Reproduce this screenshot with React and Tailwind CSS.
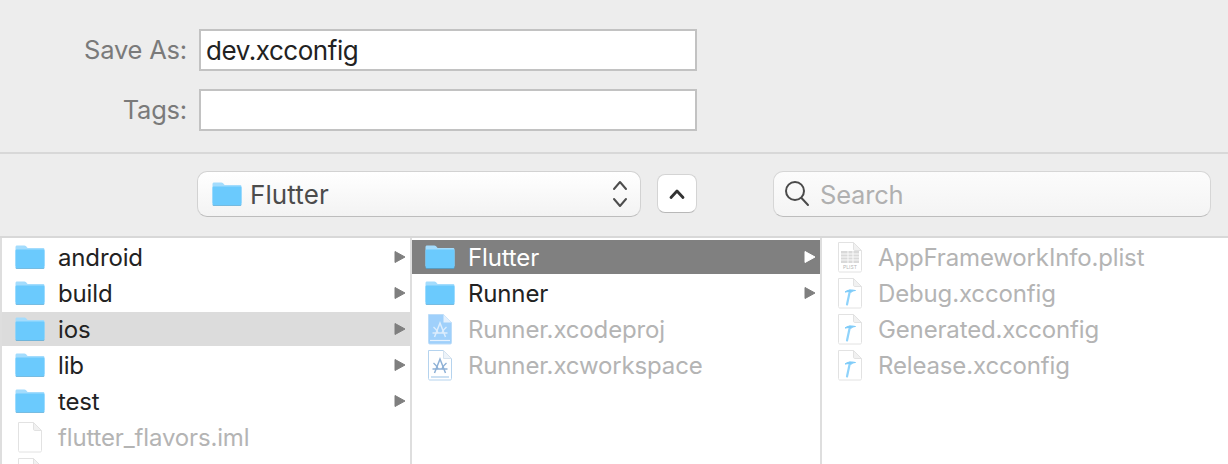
const font = { fontFamily: "Inter, 'Liberation Sans', sans-serif" };

function Folder({ className = "" }) {
  return (
    <svg width="30" height="24" viewBox="0 0 30 24" className={className}>
      <path d="M0.500 21V2c0-1 .6-1.600 1.600-1.600h7.200c.8 0 1.300.2 1.800.8L12.600 3H28c1 0 1.500.6 1.500 1.500V21z" fill="#a3dcfd" />
      <path d="M0.500 5.800c0-.8.600-1.300 1.300-1.300h26.400c.8 0 1.300.5 1.300 1.300V21.500c0 1-.6 1.500-1.500 1.500H2c-.9 0-1.500-.5-1.500-1.500z" fill="#6bcafd" />
      <path d="M0.500 21.500c0 1 .6 1.500 1.500 1.500h26c.9 0 1.500-.5 1.500-1.500v.8c0 1-.6 1.500-1.500 1.500H2c-.9 0-1.500-.5-1.500-1.500z" fill="#4ba6d8" />
    </svg>
  );
}

function Page({ children }) {
  return (
    <svg width="24" height="31" viewBox="1 1 24 31" className="shrink-0">
      <path d="M1.500 1.500h15l8 8V29.500c0 1-.5 1.500-1.500 1.500H3c-1 0-1.500-.5-1.500-1.500z" fill="#fff" stroke="#e2e2e2" />
      <path d="M16.500 1.500v6.500c0 1 .5 1.500 1.500 1.500h6.500z" fill="#f1f1f1" stroke="#e2e2e2" />
      {children}
    </svg>
  );
}

function Hammer() {
  return (
    <Page>
      <path d="M10 27.500l3-14" stroke="#8fd3fb" strokeWidth="2.200" strokeLinecap="round" />
      <path d="M8 15c2.500-2.200 6-2.500 10.500-1.500-2.200.2-3.500.7-4.200 1.800l-2-.8z" fill="#7ccbf9" stroke="#7ccbf9" strokeWidth="1" />
    </Page>
  );
}

function Plist() {
  return (
    <Page>
      <rect x="4" y="10" width="18" height="12" fill="#d9d9d9" />
      <path d="M4 13h18M4 16h18M4 19h18M11 10v12M16 10v12" stroke="#fafafa" strokeWidth="1" />
      <text x="13" y="28" textAnchor="middle" fontSize="5" fill="#b5b5b5" fontFamily="Inter, sans-serif">PLIST</text>
    </Page>
  );
}

function AppA({ stroke }) {
  return (
    <g fill="none" stroke={stroke} strokeWidth="1.500">
      <path d="M7.500 24l5.500-14 5.500 14" />
      <path d="M5.500 20h15" />
      <path d="M6.500 14c2.500 2 4 4 4.500 6M19.500 14c-2.500 2-4 4-4.500 6" />
    </g>
  );
}

function XcodeProj() {
  return (
    <svg width="24" height="31" viewBox="1 1 24 31" className="shrink-0">
      <path d="M1.500 1.500h15l8 8V29.500c0 1-.5 1.500-1.500 1.500H3c-1 0-1.500-.5-1.500-1.500z" fill="#9fd0fb" stroke="#bcdcf8" />
      <path d="M16.500 1.500v8h8z" fill="#e3f0fd" />
      <path d="M3 27.500h20" stroke="#e6f2fe" strokeWidth="1.200" />
      <AppA stroke="#dcedfd" />
    </svg>
  );
}

function XcodeWorkspace() {
  return (
    <svg width="24" height="31" viewBox="1 1 24 31" className="shrink-0">
      <path d="M1.500 1.500h15l8 8V29.500c0 1-.5 1.500-1.500 1.500H3c-1 0-1.500-.5-1.500-1.500z" fill="#fff" stroke="#b5d3ee" />
      <path d="M16.500 1.500v8h8z" fill="#edf3f9" stroke="#d5e2ee" />
      <path d="M4 28h18" stroke="#a9cbea" strokeWidth="1.200" />
      <AppA stroke="#8fb1d6" />
    </svg>
  );
}

function Arrow({ color = "#7f7f7f" }) {
  return (
    <svg width="12" height="14" viewBox="0 0 12 14" className="shrink-0">
      <path d="M1 1.500l10 5.500-10 5.500z" fill={color} stroke={color} strokeLinejoin="round" />
    </svg>
  );
}

function Row({ icon, label, state, arrow, dim }) {
  const bg = state === "sel" ? "bg-[#808080]" : state === "soft" ? "bg-[#dcdcdc]" : "";
  const text = state === "sel" ? "text-white" : dim ? "text-[#b4b4b4]" : "text-[#222222]";
  return (
    <div className={`flex items-center h-[34px] mb-[2px] pr-[4px] pl-[13px] ${bg}`}>
      <div className="w-[30px] flex justify-center shrink-0">{icon}</div>
      <span className={`flex-1 ml-[13px] pt-[2px] text-[24px] leading-none tracking-[-0.15px] ${text}`}>{label}</span>
      {arrow && <Arrow color={state === "sel" ? "#ffffff" : "#7f7f7f"} />}
    </div>
  );
}

function Field({ label, value }) {
  return (
    <div className="flex items-center">
      <label className="w-[187px] text-right text-[25.500px] leading-none tracking-[-0.2px] text-[#7a7a7a]">{label}</label>
      <div className="ml-[12px] w-[498px] h-[42px] bg-white border-2 border-[#c2c2c2] flex items-center pl-[5px] pt-[2px] text-[26px] leading-none tracking-[-0.45px] text-[#222222]">
        {value}
      </div>
    </div>
  );
}

export default function App() {
  return (
    <div className="w-[1228px] h-[464px] overflow-hidden bg-[#ededed] flex flex-col" style={font}>
      <div className="h-[152px] pt-[29px] flex flex-col gap-[18px] shrink-0">
        <Field label="Save As:" value="dev.xcconfig" />
        <Field label="Tags:" value="" />
      </div>
      <div className="h-[2px] bg-[#d8d8d8] shrink-0" />
      <div className="h-[82px] shrink-0 flex items-start pl-[197px] pt-[17px]">
        <div className="w-[444px] h-[46px] rounded-[10px] border border-[#d2d2d2] border-b-[#bdbdbd] bg-gradient-to-b from-[#ffffff] to-[#f3f3f3] flex items-center pl-[14px] pr-[12px]">
          <Folder className="shrink-0" />
          <span className="ml-[8px] pt-[2px] flex-1 text-[26px] leading-none text-[#4c4c4c] tracking-[0.1px]">Flutter</span>
          <svg width="16" height="30" viewBox="0 0 16 30" fill="none" stroke="#4d4d4d" strokeWidth="2" strokeLinecap="round" strokeLinejoin="round">
            <path d="M2 10l6-7 6 7M2 20l6 7 6-7" />
          </svg>
        </div>
        <div className="ml-[16px] mt-[3px] w-[40px] h-[39px] rounded-[8px] bg-white border border-[#d4d4d4] border-b-[#b8b8b8] flex items-center justify-center">
          <svg width="18" height="12" viewBox="0 0 18 12" fill="none" stroke="#333333" strokeWidth="2.800" strokeLinecap="round" strokeLinejoin="round">
            <path d="M3 9.500l6-6.500 6 6.500" />
          </svg>
        </div>
        <div className="ml-[76px] w-[438px] h-[46px] rounded-[10px] border border-[#d6d6d6] border-b-[#bdbdbd] bg-gradient-to-b from-[#fcfcfc] to-[#f4f4f4] flex items-center pl-[10px]">
          <svg width="26" height="28" viewBox="0 0 26 28" fill="none" stroke="#4a4a4a" strokeWidth="2" strokeLinecap="round">
            <circle cx="11" cy="11" r="9" />
            <path d="M17.500 18l6.500 7" />
          </svg>
          <span className="ml-[10px] pt-[2px] text-[25.500px] leading-none text-[#b0b0b0] tracking-[-0.2px]">Search</span>
        </div>
      </div>
      <div className="h-[2px] bg-[#d8d8d8] shrink-0" />
      <div className="flex-1 flex bg-[#dedede] gap-[2px] pl-[2px] min-h-0">
        <div className="w-[408px] bg-white pt-[2px] overflow-hidden shrink-0">
          <Row icon={<Folder />} label="android" arrow />
          <Row icon={<Folder />} label="build" arrow />
          <Row icon={<Folder />} label="ios" arrow state="soft" />
          <Row icon={<Folder />} label="lib" arrow />
          <Row icon={<Folder />} label="test" arrow />
          <Row icon={<Page />} label="flutter_flavors.iml" dim />
          <Row icon={<Page />} label="" dim />
        </div>
        <div className="w-[408px] bg-white pt-[2px] overflow-hidden shrink-0">
          <Row icon={<Folder />} label="Flutter" arrow state="sel" />
          <Row icon={<Folder />} label="Runner" arrow />
          <Row icon={<XcodeProj />} label="Runner.xcodeproj" dim />
          <Row icon={<XcodeWorkspace />} label="Runner.xcworkspace" dim />
        </div>
        <div className="flex-1 bg-white pt-[2px] overflow-hidden">
          <Row icon={<Plist />} label="AppFrameworkInfo.plist" dim />
          <Row icon={<Hammer />} label="Debug.xcconfig" dim />
          <Row icon={<Hammer />} label="Generated.xcconfig" dim />
          <Row icon={<Hammer />} label="Release.xcconfig" dim />
        </div>
      </div>
    </div>
  );
}
